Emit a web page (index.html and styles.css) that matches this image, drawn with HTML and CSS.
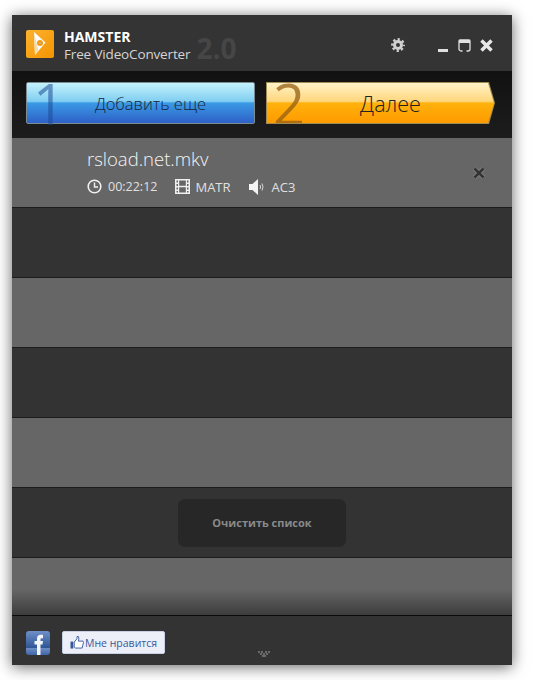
FILE: index.html
```html
<!DOCTYPE html>
<html lang="en">
<head>
    <meta charset="UTF-8">
    <meta name="viewport" content="width=device-width, initial-scale=1.0">
    <title>Hamster Free VideoConverter</title>
    <link rel="stylesheet" href="styles.css">
</head>
<body>
    <div class="window">
        <div class="header">
            <svg class="logo" width="28" height="28" viewBox="0 0 28 28">
                <defs>
                    <linearGradient id="logoFill" x1="0" y1="0" x2="1" y2="1">
                        <stop offset="0" stop-color="#fbb330"/>
                        <stop offset="1" stop-color="#f59400"/>
                    </linearGradient>
                </defs>
                <rect width="28" height="28" rx="2" fill="url(#logoFill)"/>
                <path d="M8 2 L19.500 12.500 L9 25 Z" fill="#fff"/>
                <path d="M8 2 L9 25 L12.500 20 L10.500 13 Z" fill="#efdcb4"/>
                <circle cx="14" cy="13" r="3" fill="#f59a10"/>
                <circle cx="14" cy="13" r="1" fill="#c9b48a"/>
            </svg>
            <div class="brand">
                <div class="brand-name">HAMSTER</div>
                <div class="brand-line">
                    <span class="brand-sub">Free VideoConverter</span>
                    <span class="brand-version">2.0</span>
                </div>
            </div>
            <div class="window-controls">
                <svg class="gear" width="14" height="14" viewBox="0 0 14 14">
                    <circle cx="7" cy="7" r="3.500" fill="none" stroke="#d0d0d0" stroke-width="3"/>
                    <circle cx="7" cy="7" r="5.700" fill="none" stroke="#d0d0d0" stroke-width="2.400" stroke-dasharray="2.240 2.240" stroke-dashoffset="1.120"/>
                </svg>
                <span class="minimize"></span>
                <svg class="restore" width="13" height="14" viewBox="0 0 13 14">
                    <path d="M2 1h9a1 1 0 0 1 1 1v8a2 2 0 0 1-2 2H3a2 2 0 0 1-2-2V2a1 1 0 0 1 1-1z" fill="none" stroke="#e0e0e0" stroke-width="1.300"/>
                    <rect x="1" y="1" width="11" height="3" fill="#e0e0e0"/>
                    <rect x="4.500" y="11" width="4" height="2" fill="#343434"/>
                </svg>
                <svg class="close" width="13" height="13" viewBox="0 0 13 13">
                    <path d="M1.500 1.500 L11.500 11.500 M11.500 1.500 L1.500 11.500" stroke="#e8e8e8" stroke-width="3.500"/>
                </svg>
            </div>
        </div>

        <div class="toolbar">
            <button class="step step-add">
                <span class="step-number">1</span>
                Добавить еще
            </button>
            <div class="step-next-frame">
                <button class="step step-next">
                    <span class="step-number">2</span>
                    Далее
                </button>
            </div>
        </div>

        <div class="list">
            <div class="row row-light file-row">
                <div class="file-info">
                    <div class="file-name">rsload.net.mkv</div>
                    <div class="file-meta">
                        <span class="meta-item">
                            <svg width="15" height="15" viewBox="0 0 15 15">
                                <circle cx="7.500" cy="7.500" r="6.300" fill="none" stroke="#f0f0f0" stroke-width="1.600"/>
                                <path d="M7.500 3.500V8H11" fill="none" stroke="#f0f0f0" stroke-width="1.400"/>
                            </svg>
                            00:22:12
                        </span>
                        <span class="meta-item">
                            <svg width="15" height="15" viewBox="0 0 15 15">
                                <path fill-rule="evenodd" fill="#f0f0f0" d="M0 0h15v15H0zM3 1.500H1.500v2H3zM3 5H1.500v2H3zM3 8.500H1.500v2H3zM3 12H1.500v1.500H3zM13.500 1.500H12v2h1.500zM13.500 5H12v2h1.500zM13.500 8.500H12v2h1.500zM13.500 12H12v1.500h1.500zM10.800 1.500H4.200v5.300h6.600zM10.800 8.200H4.200v5.300h6.600z"/>
                            </svg>
                            <span class="codec">MATR</span>
                        </span>
                        <span class="meta-item">
                            <svg width="16" height="16" viewBox="0 0 16 16">
                                <path d="M0 5h3.500L9 0v16L3.500 11H0z" fill="#f4f4f4"/>
                                <path d="M11 6q1.200 2 0 4M13 4.500q2 3.500 0 7" fill="none" stroke="#d8d8d8" stroke-width="1"/>
                            </svg>
                            <span class="codec">AC3</span>
                        </span>
                    </div>
                </div>
                <svg class="remove" width="14" height="14" viewBox="0 0 14 14">
                    <path d="M2.500 2.500 L11.500 11.500 M11.500 2.500 L2.500 11.500" stroke="#808080" stroke-width="4.500"/>
                    <path d="M2.500 2.500 L11.500 11.500 M11.500 2.500 L2.500 11.500" stroke="#333" stroke-width="2.500"/>
                </svg>
            </div>
            <div class="row row-dark"></div>
            <div class="row row-light"></div>
            <div class="row row-dark"></div>
            <div class="row row-light"></div>
            <div class="row row-dark">
                <button class="clear-button">Очистить список</button>
            </div>
            <div class="row row-last"></div>
        </div>

        <div class="footer">
            <svg class="fb" width="24" height="24" viewBox="0 0 24 24">
                <defs>
                    <linearGradient id="fbFill" x1="0" y1="0" x2="0" y2="1">
                        <stop offset="0" stop-color="#6f8fc8"/>
                        <stop offset="0.7" stop-color="#2f5596"/>
                        <stop offset="0.72" stop-color="#6d8cc4"/>
                        <stop offset="1" stop-color="#3f66a8"/>
                    </linearGradient>
                </defs>
                <rect width="24" height="24" rx="3" fill="url(#fbFill)"/>
                <path d="M11 24V13.500H8.500V10H11V7.500C11 5 12.500 3.800 14.500 3.800H17V7.200H15.500C14.700 7.200 14.500 7.600 14.500 8.300V10H17L16.500 13.500H14.500V24z" fill="#f2f4f8"/>
            </svg>
            <button class="like-button">
                <svg width="14" height="13" viewBox="0 0 15 14">
                    <rect x="0.500" y="6" width="3" height="7.500" fill="#3b5998"/>
                    <path d="M4.500 6.500 L7.500 3 V0.500 H9 L9.500 3 L9 5.500 H14 L14.500 7 L13 13 H6 L4.500 12z" fill="#fff" stroke="#3b5998" stroke-width="1"/>
                </svg>
                Мне нравится
            </button>
            <svg class="expand" width="12" height="7" viewBox="0 0 12 7">
                <path d="M0 0h2v2H0zM3 0h2v2H3zM7 0h2v2H7zM10 0h2v2h-2zM2 2h2v2H2zM8 2h2v2H8zM5 2h2v2H5zM4 4h4v2H4z" fill="#6a6a6a"/>
            </svg>
        </div>
    </div>
</body>
</html>
```

FILE: styles.css
```css
body {
    font-family: 'Open Sans', 'Noto Sans', sans-serif;
    background-color: #fff;
    margin: 0;
    padding: 15px 28px 15px 12px;
}

button {
    font-family: inherit;
    cursor: pointer;
}

.window {
    position: relative;
    width: 500px;
    height: 650px;
    display: flex;
    flex-direction: column;
    background-color: #333;
    box-shadow: 0 2px 14px rgba(0, 0, 0, 0.6);
}

/* title bar */
.header {
    height: 56px;
    flex-shrink: 0;
    display: flex;
    align-items: flex-start;
    padding: 15px 19px 0 14px;
    box-sizing: border-box;
    background-color: #343434;
}

.brand {
    margin-left: 10px;
    color: #fff;
}

.brand-name {
    font-size: 14px;
    font-weight: 700;
    line-height: 17px;
    margin-top: -2px;
}

.brand-line {
    display: flex;
    align-items: center;
    height: 17px;
}

.brand-sub {
    font-size: 13.500px;
    color: #d4d4d4;
    letter-spacing: -0.150px;
}

.brand-version {
    font-size: 28px;
    font-weight: 700;
    color: #464646;
    margin-left: 6px;
    margin-top: -11px;
}

.window-controls {
    margin-left: auto;
    margin-top: 8px;
    display: flex;
    align-items: flex-start;
}

.gear {
    margin-right: 33px;
}

.minimize {
    width: 10px;
    height: 3px;
    margin-top: 11px;
    margin-right: 10px;
    background-color: #e0e0e0;
}

.restore {
    margin-top: 1px;
    margin-right: 9px;
}

.close {
    margin-top: 1px;
}

/* step buttons */
.toolbar {
    height: 67px;
    flex-shrink: 0;
    display: flex;
    gap: 11px;
    padding: 11px 17px 14px 14px;
    box-sizing: border-box;
    background: linear-gradient(#111, #1d1d1d);
}

.step {
    position: relative;
    display: block;
    width: 229px;
    height: 42px;
    padding: 0 0 0 20px;
    font-weight: 300;
    color: #222;
}

.step-add {
    border: 1px solid #7b8d94;
    border-radius: 2px;
    background: linear-gradient(#c4f3fc 0%, #80cdf2 46%, #3a9ae6 50%, #2f60c6 100%);
    color: #14253c;
    font-size: 16.500px;
}

.step-next-frame {
    width: 229px;
    height: 42px;
    background-color: #a08b52;
    clip-path: polygon(0 0, 223px 0, 229px 21px, 223px 42px, 0 42px);
}

.step-next {
    width: 227px;
    height: 40px;
    margin: 1px 0 0 1px;
    border: none;
    background: linear-gradient(#fff3c8 0%, #ffd67c 46%, #ffb20c 50%, #ff9a00 100%);
    clip-path: polygon(0 0, 221px 0, 227px 20px, 221px 40px, 0 40px);
    font-size: 21.500px;
}

.step-number {
    position: absolute;
    left: 6px;
    top: 0;
    font-size: 56px;
    font-weight: 400;
    line-height: 40px;
}

.step-add .step-number {
    color: rgba(30, 75, 150, 0.55);
}

.step-next .step-number {
    color: rgba(150, 95, 20, 0.75);
}

/* file list */
.list {
    flex: 1;
    display: flex;
    flex-direction: column;
    min-height: 0;
}

.row {
    height: 70px;
    flex-shrink: 0;
    box-sizing: border-box;
    border-bottom: 1px solid #1c1c1c;
}

.row-light {
    background-color: #666;
}

.row-dark {
    background-color: #333;
    display: flex;
    align-items: center;
    justify-content: center;
}

.row-last {
    flex: 1;
    border-bottom: none;
    background: linear-gradient(#666 0%, #666 55%, #3c3c3c 100%);
}

.file-row {
    display: flex;
    align-items: center;
    padding: 0 26px 0 75px;
}

.file-info {
    color: #f0f0f0;
}

.file-name {
    font-size: 18.500px;
    font-weight: 300;
    line-height: 24px;
    margin-top: -3px;
    color: #f4f4f4;
}

.file-meta {
    display: flex;
    gap: 18px;
    margin-top: 7px;
    font-size: 12.500px;
    color: #e0e0e0;
}

.meta-item {
    display: flex;
    align-items: center;
    gap: 6px;
}

.codec {
    font-size: 13px;
    margin-left: -1px;
}

.meta-item:last-child .codec {
    margin-left: 1px;
}

.remove {
    margin-left: auto;
    margin-top: 1px;
}

.clear-button {
    width: 168px;
    height: 48px;
    border: none;
    border-radius: 7px;
    background-color: #272727;
    color: #8a8a8a;
    font-size: 11px;
    font-weight: 700;
}

/* bottom bar */
.footer {
    height: 50px;
    flex-shrink: 0;
    display: flex;
    align-items: flex-start;
    gap: 12px;
    padding: 15px 14px 0;
    box-sizing: border-box;
    border-top: 1px solid #0c0c0c;
    background-color: #333;
}

.like-button {
    display: flex;
    align-items: center;
    gap: 1px;
    width: 103px;
    height: 23px;
    padding: 0 0 0 7px;
    border: 1px solid #c8d0e4;
    border-radius: 2px;
    background-color: #eceef8;
    color: #3b5998;
    font-size: 10.500px;
    white-space: nowrap;
}

.expand {
    position: absolute;
    left: 246px;
    bottom: 7px;
}
```
